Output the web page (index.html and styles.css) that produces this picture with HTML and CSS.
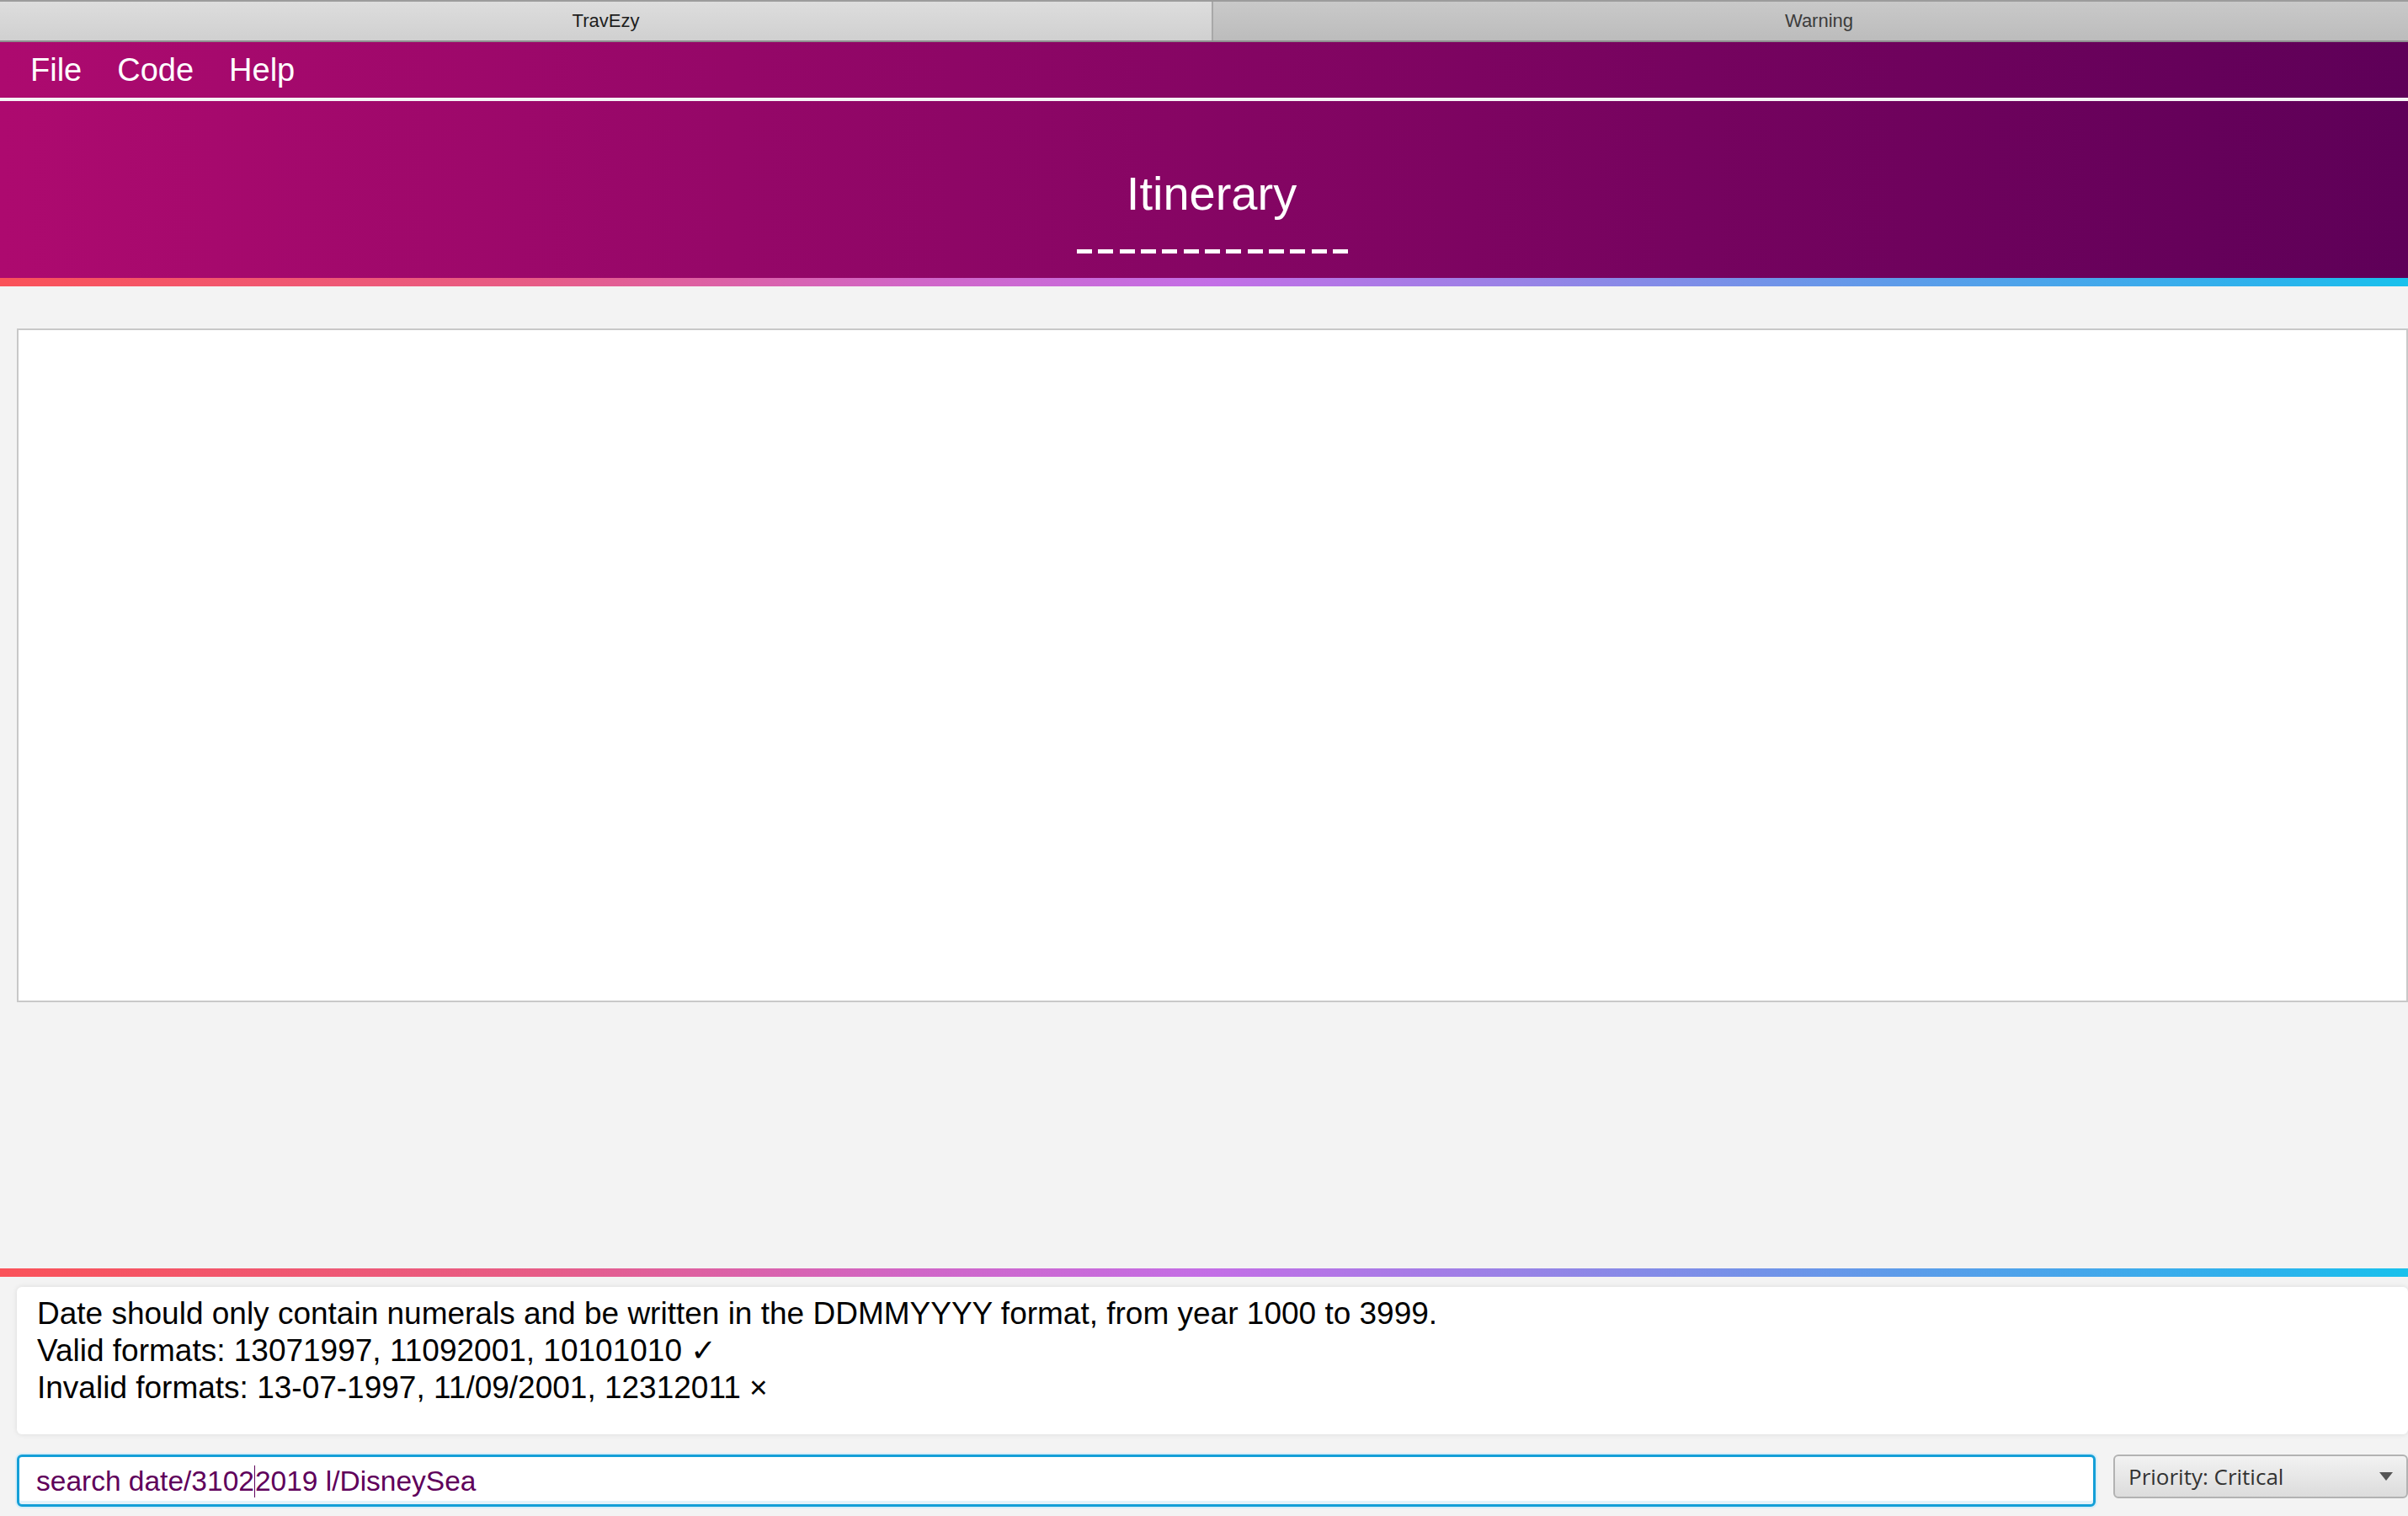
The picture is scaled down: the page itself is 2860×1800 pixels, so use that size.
FILE: index.html
```html
<!DOCTYPE html>
<html>
<head>
<meta charset="utf-8">
<title>TravEzy</title>
<link rel="stylesheet" href="styles.css">
</head>
<body>
<div class="app">
  <div class="tabs">
    <div class="tab tab-active">TravEzy</div>
    <div class="tab tab-inactive">Warning</div>
  </div>
  <div class="menubar">
    <span class="menu-item">File</span>
    <span class="menu-item">Code</span>
    <span class="menu-item">Help</span>
  </div>
  <div class="header">
    <div class="title">Itinerary</div>
    <div class="dashes"></div>
  </div>
  <div class="rainbow"></div>
  <div class="main">
    <div class="list-box"></div>
  </div>
  <div class="rainbow"></div>
  <div class="bottom">
    <div class="result">
      <div class="result-line">Date should only contain numerals and be written in the DDMMYYYY format, from year 1000 to 3999.</div>
      <div class="result-line">Valid formats: 13071997, 11092001, 10101010 ✓</div>
      <div class="result-line">Invalid formats: 13-07-1997, 11/09/2001, 12312011 ×</div>
    </div>
    <div class="command-row">
      <div class="command">
        <span class="cmd-text">search date/3102<span class="caret"></span>2019 l/DisneySea</span>
      </div>
      <div class="combo">
        <span class="combo-text">Priority: Critical</span>
        <span class="combo-arrow"></span>
      </div>
    </div>
  </div>
</div>
</body>
</html>
```

FILE: styles.css
```css
html, body {
  margin: 0;
  padding: 0;
  width: 2860px;
  height: 1800px;
  overflow: hidden;
  background: #f3f3f3;
}

.app {
  width: 2880px;
  height: 1800px;
  display: flex;
  flex-direction: column;
  font-family: "Liberation Sans", Arial, sans-serif;
}

.tabs {
  display: flex;
  height: 46px;
  border-top: 2px solid #9c9c9c;
  border-bottom: 2px solid #8f8f8f;
}

.tab {
  flex: 1;
  text-align: center;
  line-height: 46px;
  font-size: 22px;
}

.tab-active {
  background: linear-gradient(to bottom, #dddddd, #d0d0d0);
  color: #1e1e1e;
  border-right: 2px solid #a8a8a8;
}

.tab-inactive {
  background: linear-gradient(to bottom, #c9c9c9, #bcbcbc);
  color: #3c3c3c;
}

.menubar {
  height: 66px;
  display: flex;
  align-items: center;
  padding-left: 36px;
  gap: 42px;
  background: linear-gradient(to right, #ad0a6f, #5e0058);
  border-bottom: 4px solid #f6f3f5;
}

.menu-item {
  color: #ffffff;
  font-size: 38px;
  line-height: 66px;
}

.header {
  height: 210px;
  box-sizing: border-box;
  padding-top: 78px;
  display: flex;
  flex-direction: column;
  align-items: center;
  background: linear-gradient(to right, #ad0a6f, #5e0058);
}

.title {
  color: #ffffff;
  font-size: 56px;
  line-height: 64px;
  margin-left: -2px;
}

.dashes {
  margin-top: 34px;
  width: 322px;
  height: 5px;
  background: repeating-linear-gradient(to right, #ffffff 0 18px, transparent 18px 25.33px);
}

.rainbow {
  height: 10px;
  background: linear-gradient(to right, #fa5259 0%, #e75c86 22%, #d066c8 38%, #c36ee6 50%, #9783e6 63%, #5e9be9 78%, #2bb3ec 94%, #16c3ec 100%);
}

.main {
  height: 1166px;
  box-sizing: border-box;
  padding: 50px 20px 0 20px;
  background: #f3f3f3;
}

.list-box {
  height: 800px;
  box-sizing: border-box;
  background: #ffffff;
  border: 2px solid #c8c8c8;
}

.bottom {
  flex: 1;
  background: #f3f3f3;
  padding: 12px 20px 0 20px;
  display: flex;
  flex-direction: column;
  gap: 24px;
}

.result {
  height: 175px;
  box-sizing: border-box;
  background: #ffffff;
  border-radius: 6px;
  box-shadow: 0 0 6px rgba(0, 0, 0, 0.10);
  padding: 10px 24px;
}

.result-line {
  font-size: 37px;
  line-height: 44px;
  color: #000000;
  white-space: nowrap;
}

.command-row {
  display: flex;
  gap: 21px;
  align-items: flex-start;
}

.command {
  flex: 1;
  height: 62px;
  box-sizing: border-box;
  background: #ffffff;
  border: 3px solid #149fd7;
  border-radius: 6px;
  box-shadow: 0 0 0 2px #d9eef8, inset 0 -4px 0 #e3f2fa;
  display: flex;
  align-items: center;
  padding-left: 20px;
}

.cmd-text {
  font-size: 33.5px;
  color: #5f005b;
  white-space: nowrap;
  padding-top: 2px;
}

.caret {
  display: inline-block;
  width: 1px;
  height: 38px;
  background: #5f005b;
  vertical-align: -8px;
}

.combo {
  width: 350px;
  height: 52px;
  box-sizing: border-box;
  border: 2px solid #b2b2b2;
  border-radius: 6px;
  background: linear-gradient(to bottom, #f2f2f2, #dcdcdc);
  display: flex;
  align-items: center;
  justify-content: space-between;
  padding: 0 16px 0 16px;
}

.combo-text {
  font-family: "Open Sans", "Liberation Sans", sans-serif;
  font-size: 26px;
  color: #333333;
}

.combo-arrow {
  width: 0;
  height: 0;
  border-left: 8px solid transparent;
  border-right: 8px solid transparent;
  border-top: 10px solid #555555;
}
```
